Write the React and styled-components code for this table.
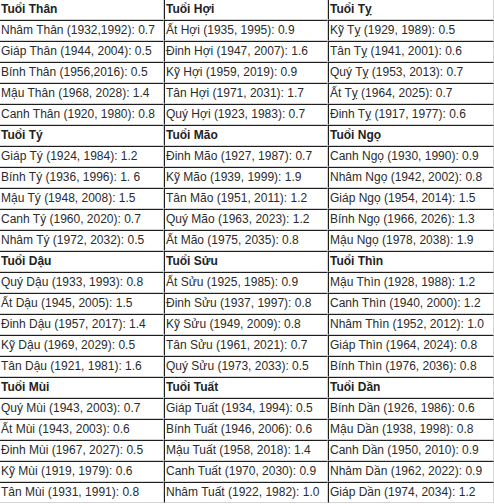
import React from "react";
import styled, { createGlobalStyle } from "styled-components";

const GlobalStyle = createGlobalStyle`
  html, body {
    margin: 0;
    padding: 0;
    background: #fff;
  }
  body {
    font-family: "Liberation Sans", Arial, sans-serif;
    overflow: hidden;
  }
`;

const Table = styled.table`
  border-collapse: separate;
  border-spacing: 0;
  table-layout: fixed;
  width: 495px;
  margin: -1px 0 0 -1px;
  font-size: 12px;
  color: #2b2b2b;
`;

const Col = styled.col`
  width: ${(p) => p.$w}px;
`;

const Cell = styled.td`
  height: 19px;
  padding: 0 1px;
  line-height: 19px;
  white-space: nowrap;
  overflow: hidden;
  border-top: 1px solid #1e1e1e;
  border-left: 1px solid #1e1e1e;
  border-bottom: 1px solid #d4d4d4;
  border-right: 1px solid #d4d4d4;
  font-weight: ${(p) => (p.$head ? "bold" : "normal")};
  color: ${(p) => (p.$head ? "#222" : "#2b2b2b")};
`;

const groups = [
  {
    heads: ["Tuổi Thân", "Tuổi Hợi", "Tuổi Tỵ"],
    rows: [
      ["Nhâm Thân (1932,1992): 0.7", "Ất Hợi (1935, 1995): 0.9", "Kỹ Tỵ (1929, 1989): 0.5"],
      ["Giáp Thân (1944, 2004): 0.5", "Đinh Hợi (1947, 2007): 1.6", "Tân Tỵ (1941, 2001): 0.6"],
      ["Bính Thân (1956,2016): 0.5", "Kỹ Hợi (1959, 2019): 0.9", "Quý Tỵ (1953, 2013): 0.7"],
      ["Mậu Thân (1968, 2028): 1.4", "Tân Hợi (1971, 2031): 1.7", "Ất Tỵ (1964, 2025): 0.7"],
      ["Canh Thân (1920, 1980): 0.8", "Quý Hợi (1923, 1983): 0.7", "Đinh Tỵ (1917, 1977): 0.6"],
    ],
  },
  {
    heads: ["Tuổi Tý", "Tuổi Mão", "Tuổi Ngọ"],
    rows: [
      ["Giáp Tý (1924, 1984): 1.2", "Đinh Mão (1927, 1987): 0.7", "Canh Ngọ (1930, 1990): 0.9"],
      ["Bính Tý (1936, 1996): 1. 6", "Kỹ Mão (1939, 1999): 1.9", "Nhâm Ngọ (1942, 2002): 0.8"],
      ["Mậu Tý (1948, 2008): 1.5", "Tân Mão (1951, 2011): 1.2", "Giáp Ngọ (1954, 2014): 1.5"],
      ["Canh Tý (1960, 2020): 0.7", "Quý Mão (1963, 2023): 1.2", "Bính Ngọ (1966, 2026): 1.3"],
      ["Nhâm Tý (1972, 2032): 0.5", "Ất Mão (1975, 2035): 0.8", "Mậu Ngọ (1978, 2038): 1.9"],
    ],
  },
  {
    heads: ["Tuổi Dậu", "Tuổi Sửu", "Tuổi Thìn"],
    rows: [
      ["Quý Dậu (1933, 1993): 0.8", "Ất Sửu (1925, 1985): 0.9", "Mậu Thìn (1928, 1988): 1.2"],
      ["Ất Dậu (1945, 2005): 1.5", "Đinh Sửu (1937, 1997): 0.8", "Canh Thìn (1940, 2000): 1.2"],
      ["Đinh Dậu (1957, 2017): 1.4", "Kỹ Sửu (1949, 2009): 0.8", "Nhâm Thìn (1952, 2012): 1.0"],
      ["Kỹ Dậu (1969, 2029): 0.5", "Tân Sửu (1961, 2021): 0.7", "Giáp Thìn (1964, 2024): 0.8"],
      ["Tân Dậu (1921, 1981): 1.6", "Quý Sửu (1973, 2033): 0.5", "Bính Thìn (1976, 2036): 0.8"],
    ],
  },
  {
    heads: ["Tuổi Mùi", "Tuổi Tuất", "Tuổi Dần"],
    rows: [
      ["Quý Mùi (1943, 2003): 0.7", "Giáp Tuất (1934, 1994): 0.5", "Bính Dần (1926, 1986): 0.6"],
      ["Ất Mùi (1943, 2003): 0.6", "Bính Tuất (1946, 2006): 0.6", "Mậu Dần (1938, 1998): 0.8"],
      ["Đinh Mùi (1967, 2027): 0.5", "Mậu Tuất (1958, 2018): 1.4", "Canh Dần (1950, 2010): 0.9"],
      ["Kỹ Mùi (1919, 1979): 0.6", "Canh Tuất (1970, 2030): 0.9", "Nhâm Dần (1962, 2022): 0.9"],
      ["Tân Mùi (1931, 1991): 0.8", "Nhâm Tuất (1922, 1982): 1.0", "Giáp Dần (1974, 2034): 1.2"],
    ],
  },
];

const widths = [165, 164, 166];

export default function App() {
  return (
    <>
      <GlobalStyle />
      <Table>
        <colgroup>
          {widths.map((w, i) => (
            <Col key={i} $w={w} />
          ))}
        </colgroup>
        <tbody>
          {groups.map((g, gi) => (
            <React.Fragment key={gi}>
              <tr>
                {g.heads.map((h) => (
                  <Cell $head key={h}>
                    {h}
                  </Cell>
                ))}
              </tr>
              {g.rows.map((r, ri) => (
                <tr key={ri}>
                  {r.map((c) => (
                    <Cell key={c}>{c}</Cell>
                  ))}
                </tr>
              ))}
            </React.Fragment>
          ))}
        </tbody>
      </Table>
    </>
  );
}
